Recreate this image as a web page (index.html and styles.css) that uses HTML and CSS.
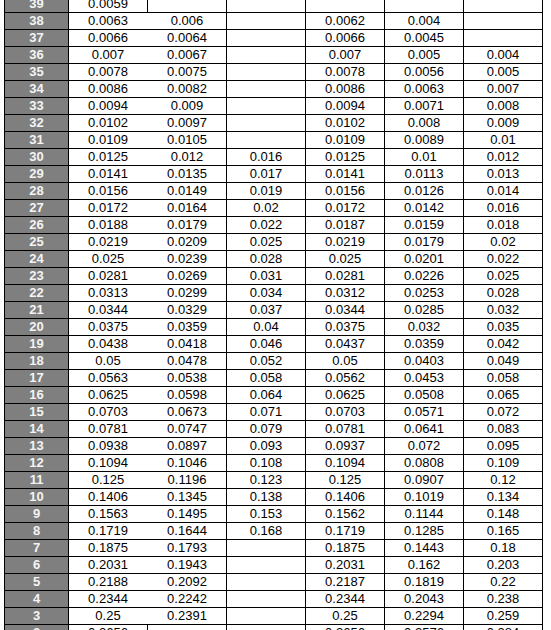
FILE: index.html
```html
<!DOCTYPE html>
<html>
<head>
<meta charset="utf-8">
<link rel="stylesheet" href="styles.css">
</head>
<body>
<div class="sheet" id="sheet"></div>
<script>
var rows = [
[39,"0.0059","","","","",""],
[38,"0.0063","0.006","","0.0062","0.004",""],
[37,"0.0066","0.0064","","0.0066","0.0045",""],
[36,"0.007","0.0067","","0.007","0.005","0.004"],
[35,"0.0078","0.0075","","0.0078","0.0056","0.005"],
[34,"0.0086","0.0082","","0.0086","0.0063","0.007"],
[33,"0.0094","0.009","","0.0094","0.0071","0.008"],
[32,"0.0102","0.0097","","0.0102","0.008","0.009"],
[31,"0.0109","0.0105","","0.0109","0.0089","0.01"],
[30,"0.0125","0.012","0.016","0.0125","0.01","0.012"],
[29,"0.0141","0.0135","0.017","0.0141","0.0113","0.013"],
[28,"0.0156","0.0149","0.019","0.0156","0.0126","0.014"],
[27,"0.0172","0.0164","0.02","0.0172","0.0142","0.016"],
[26,"0.0188","0.0179","0.022","0.0187","0.0159","0.018"],
[25,"0.0219","0.0209","0.025","0.0219","0.0179","0.02"],
[24,"0.025","0.0239","0.028","0.025","0.0201","0.022"],
[23,"0.0281","0.0269","0.031","0.0281","0.0226","0.025"],
[22,"0.0313","0.0299","0.034","0.0312","0.0253","0.028"],
[21,"0.0344","0.0329","0.037","0.0344","0.0285","0.032"],
[20,"0.0375","0.0359","0.04","0.0375","0.032","0.035"],
[19,"0.0438","0.0418","0.046","0.0437","0.0359","0.042"],
[18,"0.05","0.0478","0.052","0.05","0.0403","0.049"],
[17,"0.0563","0.0538","0.058","0.0562","0.0453","0.058"],
[16,"0.0625","0.0598","0.064","0.0625","0.0508","0.065"],
[15,"0.0703","0.0673","0.071","0.0703","0.0571","0.072"],
[14,"0.0781","0.0747","0.079","0.0781","0.0641","0.083"],
[13,"0.0938","0.0897","0.093","0.0937","0.072","0.095"],
[12,"0.1094","0.1046","0.108","0.1094","0.0808","0.109"],
[11,"0.125","0.1196","0.123","0.125","0.0907","0.12"],
[10,"0.1406","0.1345","0.138","0.1406","0.1019","0.134"],
[9,"0.1563","0.1495","0.153","0.1562","0.1144","0.148"],
[8,"0.1719","0.1644","0.168","0.1719","0.1285","0.165"],
[7,"0.1875","0.1793","","0.1875","0.1443","0.18"],
[6,"0.2031","0.1943","","0.2031","0.162","0.203"],
[5,"0.2188","0.2092","","0.2187","0.1819","0.22"],
[4,"0.2344","0.2242","","0.2344","0.2043","0.238"],
[3,"0.25","0.2391","","0.25","0.2294","0.259"],
[2,"0.2656","","","0.2656","0.2576","0.284"]
];
var sheet = document.getElementById("sheet");
rows.forEach(function (r, i) {
  var row = document.createElement("div");
  row.className = "row" + (i === 0 || i === rows.length - 1 ? " split" : "");
  r.forEach(function (v, j) {
    var c = document.createElement("div");
    c.className = j === 0 ? "cell num" : "cell c" + j;
    c.textContent = v;
    row.appendChild(c);
  });
  sheet.appendChild(row);
});
</script>
</body>
</html>
```
FILE: styles.css
```css
html, body {
  margin: 0;
  padding: 0;
  background: #ffffff;
}
.sheet {
  margin-top: -5px;
  margin-left: 4px;
  width: 539px;
  border-top: 1px solid #000;
  font-family: "Liberation Sans", Arial, sans-serif;
  font-size: 13px;
  color: #000;
}
.row {
  display: grid;
  grid-template-columns: 64px 79px 79px 79px 79px 79px 79px;
  height: 17px;
  box-sizing: border-box;
  border-bottom: 1px solid #000;
  border-left: 1px solid #000;
}
.cell {
  box-sizing: border-box;
  border-right: 1px solid #000;
  text-align: center;
  line-height: 16px;
  white-space: nowrap;
}
.row .c1 {
  border-right-color: transparent;
}
.row.split .c1 {
  border-right-color: #000;
}
.num {
  background: #7f7f7f;
  color: #f4f4f4;
  font-weight: bold;
}
```
